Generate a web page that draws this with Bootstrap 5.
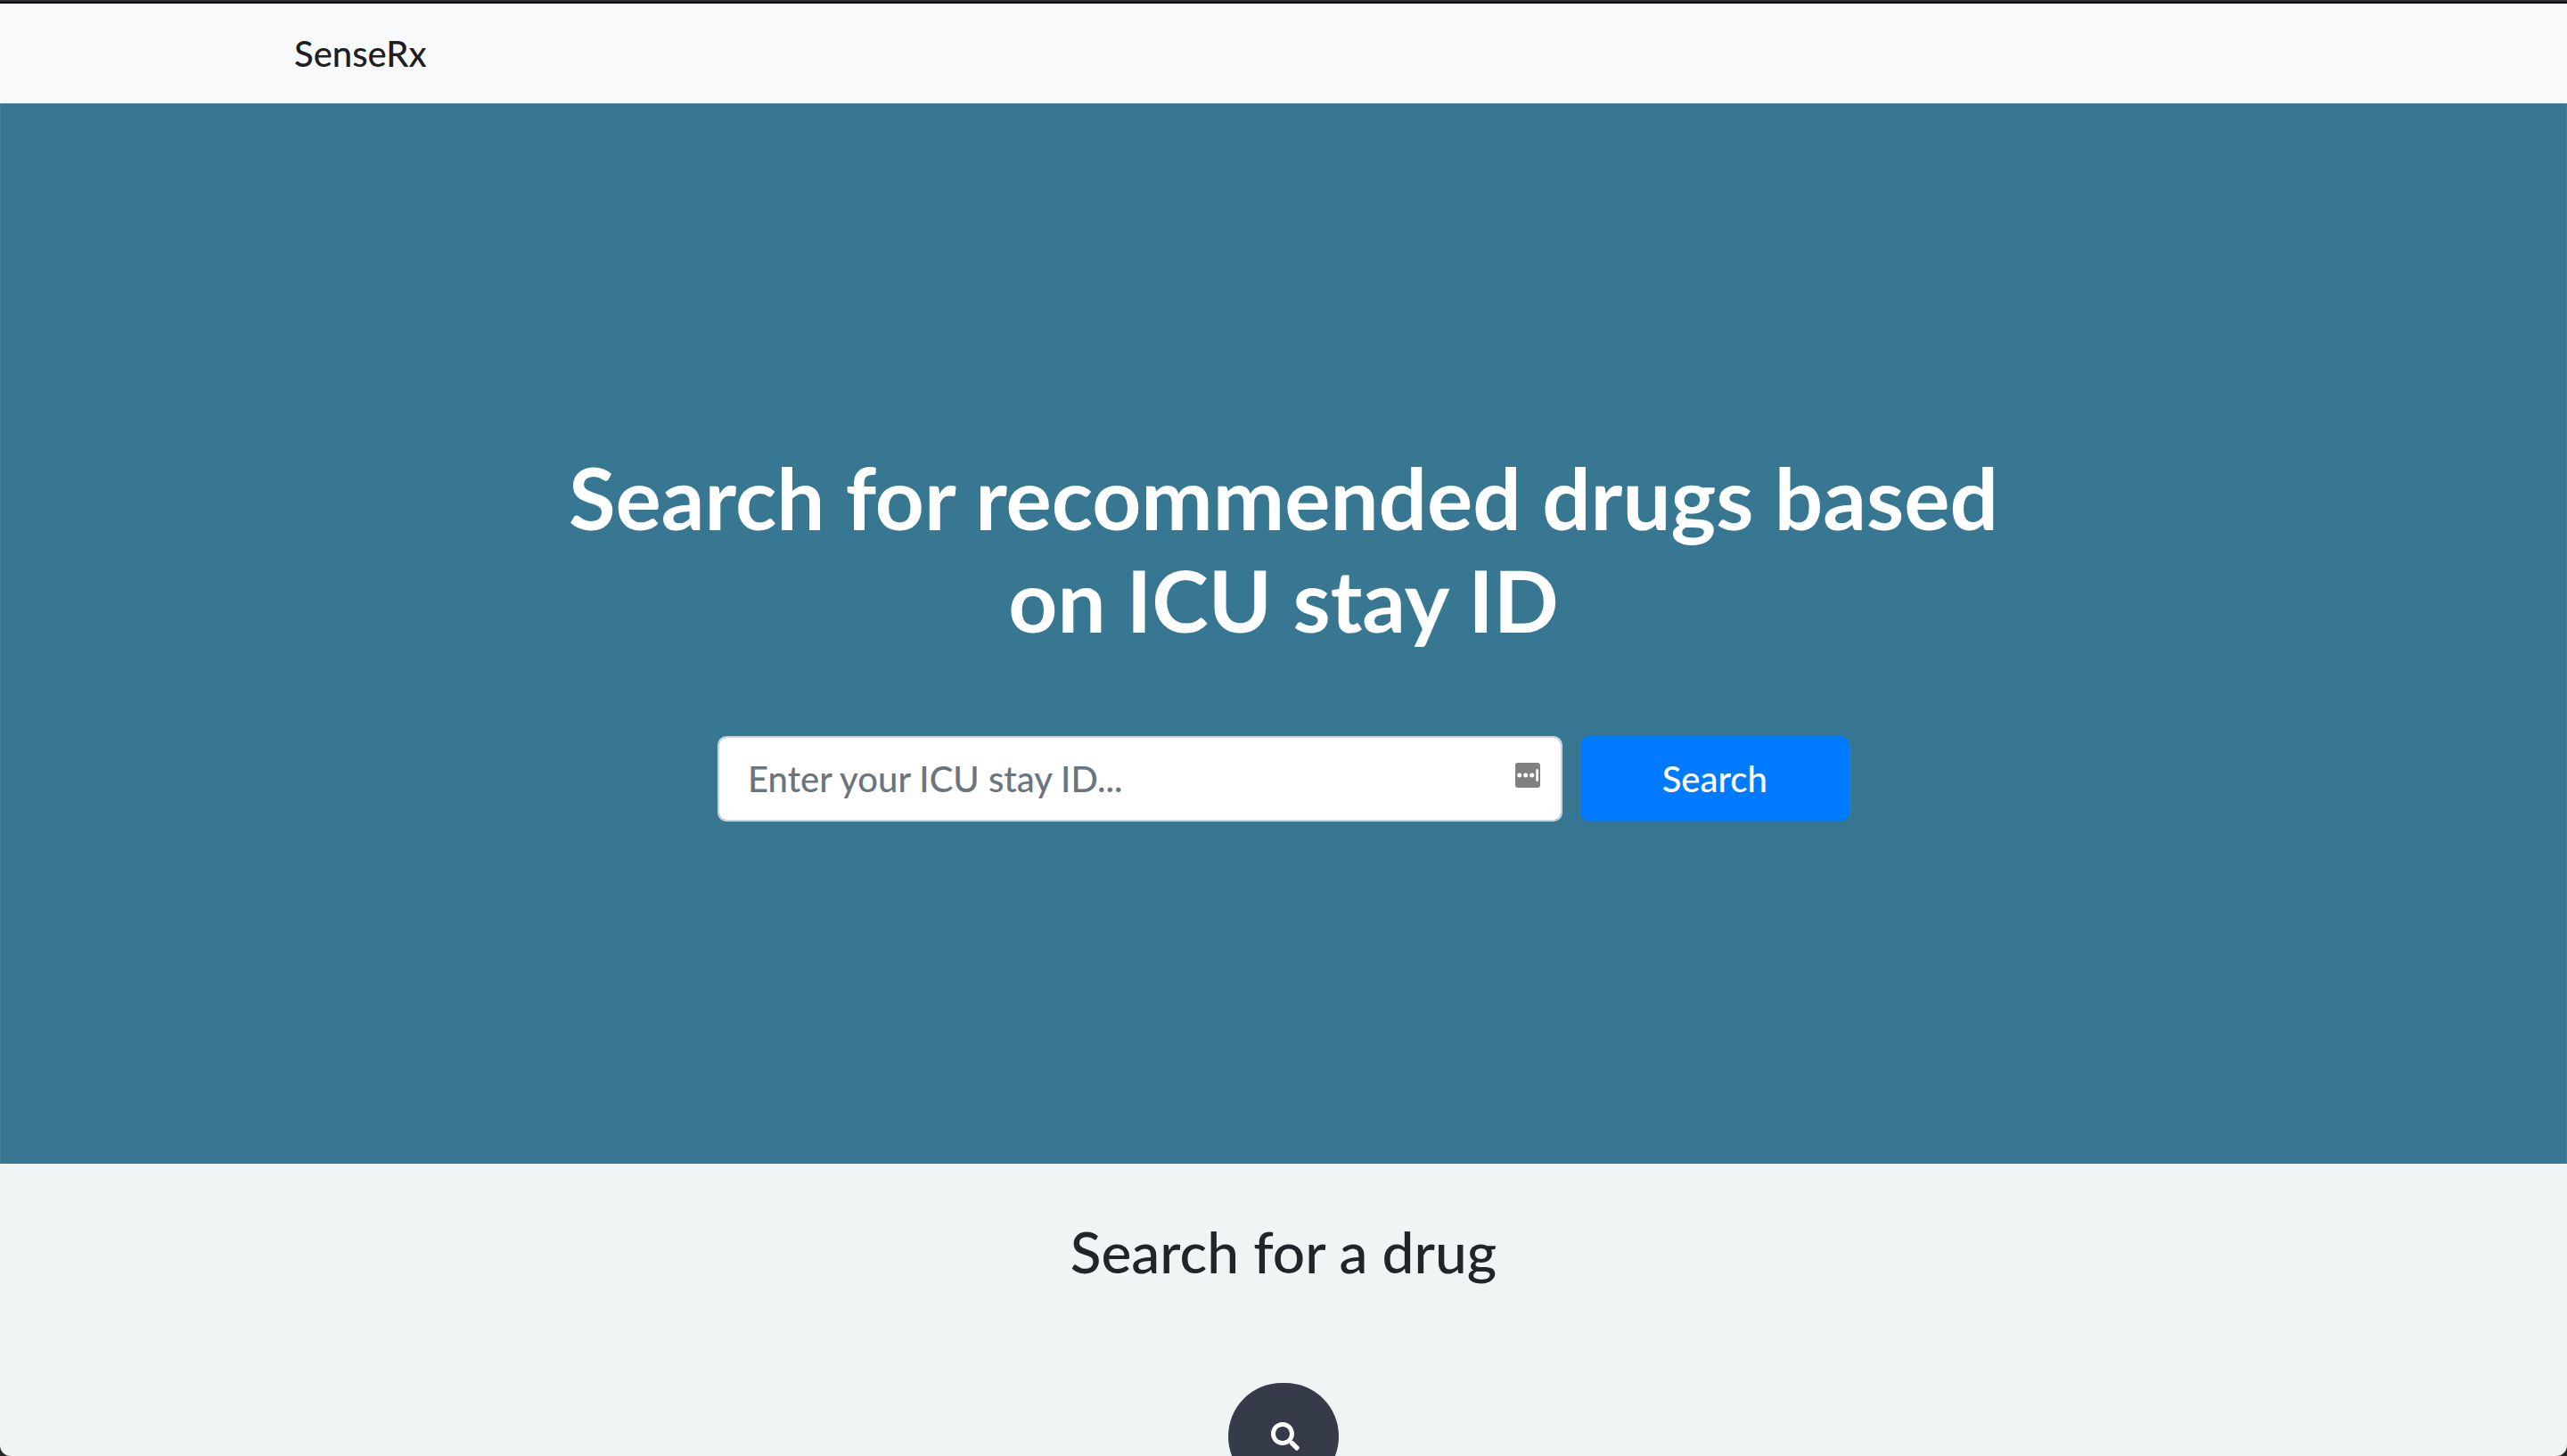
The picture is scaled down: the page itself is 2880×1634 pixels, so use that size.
<!DOCTYPE html>
<html lang="en">
<head>
<meta charset="utf-8">
<meta name="viewport" content="width=device-width, initial-scale=1">
<title>SenseRx</title>
<link href="https://cdn.jsdelivr.net/npm/bootstrap@5.3.0/dist/css/bootstrap.min.css" rel="stylesheet">
<style>
  html { font-size: 32px; background: #2a2628; }
  body { font-family: Lato, "Open Sans", sans-serif; background: transparent; color: #212529; }
  .app-frame { border-top: 2px solid #303034; border-radius: 0 0 12px 12px; background: #f0f4f5; }
  .page-wrap { max-width: 2280px; padding-left: 30px; padding-right: 30px; }
  .page-wrap > .row { --bs-gutter-x: 60px; }
  .topbar { min-height: 114px; padding: 0; border-top: 2px solid #0b0b12; background: #f8f9fb; }
  .topbar .navbar-brand { font-size: 40px; line-height: 60px; padding: 0; font-weight: 500; color: rgba(0, 0, 0, .9); }
  .hero { padding: 384px 0; background: #377792; border: 1px solid #45819a; border-width: 0 1px; }
  .hero-title { font-size: 96px; line-height: 115px; font-weight: 700; }
  .row.search-form { --bs-gutter-x: 20px; }
  .search-form .form-control { height: 96px; padding: 0 32px; font-size: 40px; line-height: 60px; font-weight: 500; border: 2px solid #ced4da; border-radius: 10px; }
  .search-form .form-control::placeholder { color: #6c757d; }
  .search-form .btn { height: 96px; padding: 0; font-size: 40px; line-height: 60px; font-weight: 500; border: 0; border-radius: 10px; background: #007bff; }
  .autofill-icon { top: 30px; right: 35px; width: 28px; height: 28px; }
  .drug-title { font-size: 64px; line-height: 77px; font-weight: 500; }
  .drug-section { padding-top: 60px; }
  .drug-section .drug-btn { width: 124px; height: 120px; margin-top: 109px; padding: 0 0 0 4px; border: 0; border-radius: 62px; background: #363b49; color: #fff; }
  .drug-btn svg { width: 32px; height: 32px; }
</style>
<script src="https://cdn.jsdelivr.net/npm/bootstrap@5.3.0/dist/js/bootstrap.bundle.min.js" defer></script>
</head>
<body>
<div class="app-frame vh-100 overflow-hidden">
  <nav class="navbar topbar">
    <div class="container-fluid page-wrap">
      <a class="navbar-brand" href="#">SenseRx</a>
    </div>
  </nav>
  <header class="hero text-center text-white">
    <div class="container-fluid page-wrap">
      <div class="row justify-content-center">
        <div class="col-9">
          <h1 class="hero-title mb-5">Search for recommended drugs based on ICU stay ID</h1>
        </div>
      </div>
      <div class="row justify-content-center">
        <div class="col-7">
          <form class="row search-form">
            <div class="col-9 position-relative">
              <input type="text" class="form-control" placeholder="Enter your ICU stay ID..." aria-label="ICU stay ID">
              <svg class="autofill-icon position-absolute" viewBox="0 0 28 28" aria-hidden="true">
                <rect width="28" height="28" rx="3" fill="#808080"/>
                <g fill="#fff"><circle cx="4.700" cy="14" r="2.500"/><circle cx="11.700" cy="14" r="2.500"/><circle cx="18.700" cy="14" r="2.500"/><rect x="23.300" y="7" width="2.600" height="14" rx="1.200"/></g>
              </svg>
            </div>
            <div class="col-3">
              <button type="button" class="btn btn-primary w-100">Search</button>
            </div>
          </form>
        </div>
      </div>
    </div>
  </header>
  <section class="drug-section text-center">
    <h2 class="drug-title mb-0">Search for a drug</h2>
    <button type="button" class="btn drug-btn d-inline-flex align-items-center justify-content-center" aria-label="Search for a drug">
      <svg viewBox="0 0 512 512" fill="currentColor" aria-hidden="true"><path d="M505 442.700L405.300 343c-4.500-4.500-10.600-7-17-7H372c27.600-35.300 44-79.700 44-128C416 93.100 322.900 0 208 0S0 93.100 0 208s93.100 208 208 208c48.300 0 92.700-16.400 128-44v16.300c0 6.400 2.500 12.500 7 17l99.700 99.700c9.400 9.400 24.600 9.400 33.900 0l28.300-28.300c9.400-9.400 9.400-24.600.1-34zM208 336c-70.700 0-128-57.200-128-128 0-70.700 57.200-128 128-128 70.700 0 128 57.200 128 128 0 70.700-57.200 128-128 128z"/></svg>
    </button>
  </section>
</div>
</body>
</html>
